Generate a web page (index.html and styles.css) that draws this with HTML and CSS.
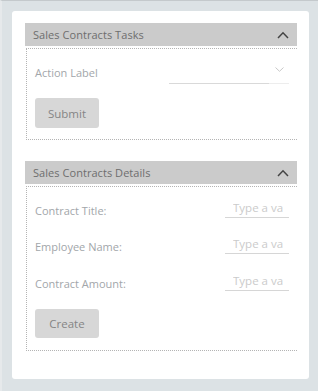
FILE: index.html
```html
<!DOCTYPE html>
<html>
<head>
<meta charset="utf-8">
<link rel="stylesheet" href="styles.css">
</head>
<body>
<div class="card">
  <section class="panel">
    <div class="panel-head">
      <span class="panel-title">Sales Contracts Tasks</span>
      <svg class="chev-up" width="12" height="8" viewBox="0 0 12 8"><path d="M1 7 L6 1.8 L11 7" fill="none" stroke="#444" stroke-width="1.5"/></svg>
    </div>
    <div class="panel-body">
      <div class="row">
        <span class="label">Action Label</span>
        <div class="select">
          <svg class="chev-down" width="9" height="5" viewBox="0 0 9 5"><path d="M0.5 0.5 L4.5 4.3 L8.5 0.5" fill="none" stroke="#c8c8c8" stroke-width="1"/></svg>
        </div>
      </div>
      <button class="btn btn-first">Submit</button>
    </div>
  </section>

  <section class="panel panel-second">
    <div class="panel-head">
      <span class="panel-title">Sales Contracts Details</span>
      <svg class="chev-up" width="12" height="8" viewBox="0 0 12 8"><path d="M1 7 L6 1.8 L11 7" fill="none" stroke="#444" stroke-width="1.5"/></svg>
    </div>
    <div class="panel-body body-second">
      <div class="row">
        <span class="label">Contract Title:</span>
        <input class="input" type="text" placeholder="Type a value">
      </div>
      <div class="row row-gap">
        <span class="label">Employee Name:</span>
        <input class="input" type="text" placeholder="Type a value">
      </div>
      <div class="row row-gap2">
        <span class="label">Contract Amount:</span>
        <input class="input" type="text" placeholder="Type a value">
      </div>
      <button class="btn btn-create">Create</button>
    </div>
  </section>
</div>
</body>
</html>
```
FILE: styles.css
```css
* { box-sizing: border-box; }
html, body { height: 100%; }
body {
  margin: 0;
  background: #dce2e5;
  border-top: 1px solid #c4c9cc;
  border-left: 2px solid #e6e9eb;
  padding: 10px 0 0 10px;
  font-family: "Open Sans", "Noto Sans", sans-serif;
}
.card {
  width: 297px;
  background: #fff;
  border-radius: 3px;
  padding: 12px 12px 28px 13px;
}
.panel-head {
  height: 23px;
  background: #cbcbcb;
  display: flex;
  align-items: center;
  justify-content: space-between;
  padding: 0 8px 0 8px;
}
.panel-title {
  font-size: 11px;
  color: #6e6e6e;
  letter-spacing: 0.05px;
}
.chev-up { display: block; margin-top: 1px; }
.panel-body {
  margin: 2px 0 0 1px;
  border-top: 1px dotted #b4b4b4;
  border-left: 1px dotted #b4b4b4;
  border-bottom: 1px dotted #b4b4b4;
  padding: 11px 8px 11px 8px;
}
.row {
  height: 24px;
  display: flex;
  align-items: center;
  justify-content: space-between;
}
.label {
  font-size: 11px;
  color: #a2a6aa;
}
.select {
  width: 120px;
  height: 22px;
  margin-top: 1px;
  position: relative;
  background: linear-gradient(to right, #d9d9d9 0, #d9d9d9 100px, #ededed 100px) bottom / 100% 1px no-repeat;
  display: flex;
  align-items: center;
  justify-content: flex-end;
  padding-right: 5px;
}
.chev-down { display: block; margin-top: -6px; }
.btn {
  display: block;
  width: 64px;
  height: 30px;
  border: none;
  border-radius: 3px;
  background: #d7d7d7;
  color: #858585;
  font-family: "Open Sans", "Noto Sans", sans-serif;
  font-size: 11.5px;
  padding: 0;
}
.btn-first { margin-top: 14px; }
.panel-second { margin-top: 21px; }
.body-second { padding-bottom: 12px; }
.row-gap { margin-top: 12px; }
.row-gap2 { margin-top: 13px; }
.input {
  width: 64px;
  height: 20px;
  margin-bottom: 4px;
  border: none;
  border-bottom: 1px solid #d6d6d6;
  padding: 0 6px 0 8px;
  font-family: "Open Sans", "Noto Sans", sans-serif;
  font-size: 11.5px;
  color: #555;
  outline: none;
  background: transparent;
}
.input::placeholder { color: #cbcbcb; }
.btn-create { margin-top: 14px; height: 29px; }
```
